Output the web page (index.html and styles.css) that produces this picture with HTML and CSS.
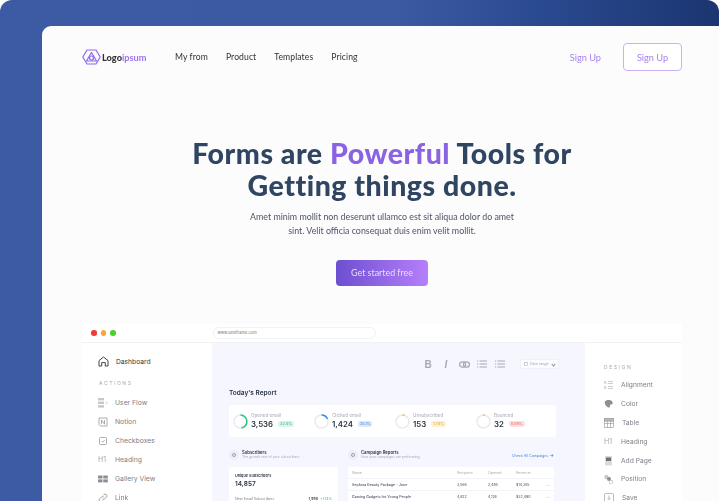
FILE: index.html
```html
<!DOCTYPE html>
<html lang="en">
<head>
    <meta charset="UTF-8">
    <meta name="viewport" content="width=device-width, initial-scale=1.0">
    <title>Forms are Powerful Tools</title>
    <link rel="stylesheet" href="styles.css">
</head>
<body>
<div class="frame">
<div class="card">

    <!-- Top nav -->
    <header class="nav">
        <a class="logo">
            <svg width="19" height="16" viewBox="0 0 19 16" fill="none" stroke="#8f68ea" stroke-width="1.2" stroke-linejoin="round">
                <path d="M5 1h9l4.2 7-4.2 7H5L.8 8z"/>
                <path d="M9.5 3.5l5 8.5h-10z"/>
                <circle cx="9.5" cy="9" r="2"/>
            </svg>
            <span class="logo-text">Logo<em>ipsum</em></span>
        </a>
        <nav class="nav-links">
            <a>My from</a>
            <a>Product</a>
            <a>Templates</a>
            <a>Pricing</a>
        </nav>
        <a class="nav-signup">Sign Up</a>
        <a class="nav-button">Sign Up</a>
    </header>

    <!-- Hero -->
    <section class="hero">
        <h1>Forms are <span>Powerful</span> Tools for<br>Getting things done.</h1>
        <p>Amet minim mollit non deserunt ullamco est sit aliqua dolor do amet<br>sint. Velit officia consequat duis enim velit mollit.</p>
        <a class="cta">Get started free</a>
    </section>

    <!-- App preview -->
    <section class="app">
        <div class="titlebar">
            <i class="dot red"></i><i class="dot yellow"></i><i class="dot green"></i>
            <div class="address">www.bestframe.com</div>
        </div>
        <div class="app-body">
            <aside class="sidebar">
                <div class="side-row side-main">
                    <svg width="11" height="11" viewBox="0 0 11 11" fill="none" stroke="#444" stroke-width="1"><path d="M1 10V4.6L5.5 1 10 4.6V10H7.3V6.6H3.700V10z"/></svg>
                    Dashboard
                </div>
                <div class="side-title">ACTIONS</div>
                <div class="side-row">
                    <svg width="10" height="10" viewBox="0 0 10 10" fill="#c4c7cd"><rect y="0" width="6" height="2.4"/><rect y="3.6" width="6" height="2.4"/><rect y="7.2" width="6" height="2.4"/><path d="M7.5 3.5L9.500 5l-2 1.500" fill="none" stroke="#c4c7cd" stroke-width=".7"/></svg>
                    User Flow
                </div>
                <div class="side-row">
                    <svg width="10" height="10" viewBox="0 0 10 10" fill="none" stroke="#999" stroke-width=".8"><path d="M1 1h8v8H2.500L1 7.500z"/><path d="M3.500 7.200V3l3 4.200V3"/></svg>
                    Notion
                </div>
                <div class="side-row">
                    <svg width="10" height="10" viewBox="0 0 10 10" fill="none" stroke="#999" stroke-width=".8"><rect x="1.500" y="1.500" width="7" height="7" rx="1"/><path d="M3.500 5l1.200 1.200 2-2.200"/></svg>
                    Checkboxes
                </div>
                <div class="side-row"><b class="h-icon">H1</b>Heading</div>
                <div class="side-row">
                    <svg width="10" height="10" viewBox="0 0 10 10" fill="#8b8f96"><rect y="1.500" width="4.500" height="3"/><rect x="5.300" y="1.500" width="4.500" height="3"/><rect y="5.400" width="4.500" height="3"/><rect x="5.300" y="5.400" width="4.500" height="3"/></svg>
                    Gallery View
                </div>
                <div class="side-row">
                    <svg width="10" height="10" viewBox="0 0 10 10" fill="none" stroke="#999" stroke-width=".9"><path d="M4.200 5.800a1.800 1.800 0 0 0 2.600 0l1.600-1.600a1.800 1.800 0 0 0-2.600-2.600l-.7.7"/><path d="M5.800 4.200a1.800 1.800 0 0 0-2.600 0L1.600 5.800a1.800 1.800 0 0 0 2.600 2.600l.7-.7"/></svg>
                    Link
                </div>
            </aside>

            <main class="report">
                <div class="toolbar">
                    <b class="tool">B</b>
                    <i class="tool tool-i">I</i>
                    <svg class="tool-svg" width="11" height="7" viewBox="0 0 11 7" fill="none" stroke="#a3a9b8" stroke-width="1.300"><rect x=".6" y=".8" width="6" height="5.400" rx="2.700"/><rect x="4.400" y=".8" width="6" height="5.400" rx="2.700"/></svg>
                    <svg class="tool-svg tool-list" width="10" height="8" viewBox="0 0 10 8" stroke="#a3a9b8" stroke-width="1.200"><path d="M0 1h1.200M2.500 1H10M0 4h1.200M2.500 4H10M0 7h1.200M2.500 7H10"/></svg>
                    <svg class="tool-svg tool-list" width="10" height="8" viewBox="0 0 10 8" stroke="#a3a9b8" stroke-width="1.200"><path d="M0 1h1.200M2.500 1H10M0 4h1.200M2.500 4H10M0 7h1.200M2.500 7H10"/></svg>
                    <div class="date-select">
                        <svg width="4" height="4" viewBox="0 0 4 4" fill="none" stroke="#a3a9b8" stroke-width=".5"><rect x=".3" y=".5" width="3.400" height="3"/></svg>
                        Date range
                        <span class="caret"></span>
                    </div>
                </div>

                <h2>Today's Report</h2>

                <div class="stats">
                    <div class="stat">
                        <svg class="ring" width="15" height="15" viewBox="0 0 15 15" fill="none" stroke-width="1.500"><circle cx="7.500" cy="7.500" r="6.500" stroke="#e9ebef"/><path d="M7.500 1a6.500 6.500 0 0 1 1 12.900" stroke="#2cc38b"/></svg>
                        <div><small>Opened email</small><div class="stat-value">3,536 <span class="pill pill-green">32.4%</span></div></div>
                    </div>
                    <div class="stat">
                        <svg class="ring" width="15" height="15" viewBox="0 0 15 15" fill="none" stroke-width="1.500"><circle cx="7.500" cy="7.500" r="6.500" stroke="#e9ebef"/><path d="M7.500 1a6.500 6.500 0 0 1 6 4" stroke="#3d8bf2"/></svg>
                        <div><small>Clicked email</small><div class="stat-value">1,424 <span class="pill pill-blue">25.1%</span></div></div>
                    </div>
                    <div class="stat">
                        <svg class="ring" width="15" height="15" viewBox="0 0 15 15" fill="none" stroke-width="1.500"><circle cx="7.500" cy="7.500" r="6.500" stroke="#e9ebef"/><path d="M7.500 1a6.500 6.500 0 0 1 2 .3" stroke="#f5b342"/></svg>
                        <div><small>Unsubscribed</small><div class="stat-value">153 <span class="pill pill-yellow">1.74%</span></div></div>
                    </div>
                    <div class="stat">
                        <svg class="ring" width="15" height="15" viewBox="0 0 15 15" fill="none" stroke-width="1.500"><circle cx="7.500" cy="7.500" r="6.500" stroke="#e9ebef"/><path d="M7.500 1h1" stroke="#ef7b7b"/></svg>
                        <div><small>Bounced</small><div class="stat-value">32 <span class="pill pill-red">0.09%</span></div></div>
                    </div>
                </div>

                <div class="panels">
                    <div class="panel panel-left">
                        <div class="panel-head">
                            <span class="panel-icon"></span>
                            <div><strong>Subscribers</strong><small>The growth rate of your subscribers</small></div>
                        </div>
                        <div class="panel-box subs">
                            <strong>Unique Subscribers</strong>
                            <div class="subs-value">14,857</div>
                            <div class="subs-row"><span>New Email Subscribers</span><b>1,958</b><em>+1.14%</em></div>
                        </div>
                    </div>
                    <div class="panel panel-right">
                        <div class="panel-head">
                            <span class="panel-icon"></span>
                            <div><strong>Campaign Reports</strong><small>How your campaigns are performing</small></div>
                            <a class="panel-link">Check All Campaigns <span>&rarr;</span></a>
                        </div>
                        <div class="panel-box table">
                            <div class="table-row table-head"><span>Name</span><span>Recipient</span><span>Opened</span><span>Revenue</span><span></span></div>
                            <div class="table-row"><b>Sephora Beauty Package - June</b><span>3,586</span><span>2,495</span><span>$14,385</span><span class="more">&middot;&middot;&middot;</span></div>
                            <div class="table-row"><b>Gaming Gadgets for Young People</b><span>4,622</span><span>4,126</span><span>$32,490</span><span class="more">&middot;&middot;&middot;</span></div>
                        </div>
                    </div>
                </div>
            </main>

            <aside class="sidebar sidebar-right">
                <div class="side-title">DESIGN</div>
                <div class="side-row">
                    <svg width="9" height="10" viewBox="0 0 9 10" stroke="#b5b8be" stroke-width=".7" fill="none"><path d="M0 4L1.200 1l1.200 3M0 9l1.200-3 1.200 3M4 1.500h5M4 3.500h5M4 6.500h5M4 8.500h5"/></svg>
                    Alignment
                </div>
                <div class="side-row">
                    <svg width="9" height="10" viewBox="0 0 9 10" fill="#8b8f96"><path d="M1 2.500C3 .5 7 .5 8.500 3c.6 1.300 0 2.500-1.500 2.500-1.200 0-1 1.200-1 2S4.500 9 3.500 8C2 7 0 4.500 1 2.500z"/></svg>
                    Color
                </div>
                <div class="side-row">
                    <svg width="10" height="10" viewBox="0 0 10 10" fill="none" stroke="#9da1a8" stroke-width=".7"><rect x=".4" y=".6" width="9.200" height="8.800"/><path d="M.4 3h9.200M.4 5.500h9.200M3.500 3v6.400M6.500 3v6.400"/><rect x=".4" y=".6" width="9.200" height="2.400" fill="#b5b8be"/></svg>
                    Table
                </div>
                <div class="side-row"><b class="h-icon">H1</b>Heading</div>
                <div class="side-row">
                    <svg width="9" height="10" viewBox="0 0 9 10"><rect x="1" y="0" width="7" height="9.500" fill="#d9dbe0"/><rect x="2" y="1.500" width="5" height="3.500" fill="#6d7178"/></svg>
                    Add Page
                </div>
                <div class="side-row">
                    <svg width="9" height="10" viewBox="0 0 9 10"><circle cx="2.500" cy="3" r="2.200" fill="#c4c7cd"/><circle cx="5" cy="5" r="2" fill="#8b8f96"/><rect x="5.500" y="6.500" width="3" height="3" fill="none" stroke="#b5b8be" stroke-width=".6"/></svg>
                    Position
                </div>
                <div class="side-row">
                    <svg width="10" height="10" viewBox="0 0 10 10" fill="none" stroke="#9da1a8" stroke-width=".7"><rect x=".5" y=".5" width="9" height="9" rx="1"/><path d="M5 2.500v4M3.500 5L5 6.500 6.500 5"/></svg>
                    Save
                </div>
            </aside>
        </div>
    </section>

</div>
</div>
</body>
</html>
```

FILE: styles.css
```css
html, body {
    margin: 0;
    height: 501px;
    overflow: hidden;
    background: #fff;
}
body {
    font-family: "Noto Sans", "Open Sans", sans-serif;
    color: #333;
}
a {
    text-decoration: none;
}
.frame {
    height: 501px;
    box-sizing: border-box;
    padding: 26px 0 0 42px;
    overflow: hidden;
    border-radius: 12px 12px 0 0;
    background: linear-gradient(90deg, #3c5ba4 0%, #3b5aa2 55%, #2a4a90 75%, #1b3570 100%);
}
.card {
    height: 475px;
    box-sizing: border-box;
    padding: 17px 37px 0 40px;
    overflow: hidden;
    background: #fcfcfd;
    border-radius: 9px 0 0 0;
}

/* nav */
.nav {
    display: flex;
    align-items: center;
    height: 28px;
    font-family: Lato, sans-serif;
    font-size: 8.600px;
    filter: blur(0.25px);
}
.logo {
    display: flex;
    align-items: center;
    gap: 1px;
    width: 93px;
}
.logo-text {
    font-family: Lato, sans-serif;
    font-weight: 900;
    font-size: 9.200px;
    color: #333;
}
.logo-text em {
    font-style: normal;
    font-weight: 700;
    color: #9a73ee;
}
.nav-links {
    display: flex;
    gap: 18px;
    flex: 1;
}
.nav-links a {
    color: #333;
    letter-spacing: 0.1px;
}
.nav-signup {
    color: #a883ee;
    margin-right: 22px;
    font-size: 9.200px;
}
.nav-button {
    width: 59px;
    height: 28px;
    box-sizing: border-box;
    display: flex;
    align-items: center;
    justify-content: center;
    color: #a883ee;
    font-size: 9.200px;
    background: #fff;
    border: 1px solid #c9b2f1;
    border-radius: 4px;
}

/* hero */
.hero {
    text-align: center;
    filter: blur(0.25px);
}
.hero h1 {
    margin: 66px 0 0;
    font-family: Lato, sans-serif;
    font-size: 28.500px;
    line-height: 32px;
    font-weight: 900;
    color: #2f4562;
    letter-spacing: 0.52px;
}
.hero h1 span {
    color: #8a63e4;
}
.hero p {
    margin: 9px 0 0;
    font-family: Lato, sans-serif;
    font-size: 8.850px;
    line-height: 14px;
    color: #4c5466;
}
.cta {
    display: block;
    width: 92px;
    height: 26px;
    margin: 22px auto 0;
    line-height: 26px;
    font-family: Lato, sans-serif;
    font-size: 8.900px;
    color: #e8defc;
    border-radius: 4px;
    background: linear-gradient(90deg, #6c4fd0, #b67ffb);
}

/* app preview */
.app {
    margin-top: 38px;
    background: #fff;
    font-family: Inter, sans-serif;
    filter: blur(0.45px);
}
.titlebar {
    display: flex;
    align-items: center;
    height: 19px;
    padding-left: 9px;
    border-bottom: 1px solid #f1f2f4;
    box-sizing: border-box;
}
.dot {
    width: 5.500px;
    height: 5.500px;
    margin-right: 4px;
    border-radius: 50%;
}
.red { background: #f5383c; }
.yellow { background: #f8a832; }
.green { background: #4cd02e; }
.address {
    margin-left: 93px;
    width: 163px;
    height: 12px;
    box-sizing: border-box;
    padding-left: 4px;
    line-height: 10px;
    font-size: 4px;
    color: #777;
    border: 1px solid #f1f2f4;
    border-radius: 6px;
}
.app-body {
    display: flex;
}
.sidebar {
    width: 130px;
    box-sizing: border-box;
    padding: 9px 0 0 16px;
    flex-shrink: 0;
}
.side-row {
    display: flex;
    align-items: center;
    gap: 7px;
    height: 19px;
    font-size: 6.800px;
    color: #7d8087;
}
.side-row svg {
    flex-shrink: 0;
}
.side-main {
    color: #333;
    font-size: 6.700px;
}
.side-title {
    margin: 7px 0 5px 1px;
    height: 10px;
    line-height: 10px;
    font-size: 5px;
    letter-spacing: 1.600px;
    color: #a5a8ae;
}
.h-icon {
    width: 10px;
    font-weight: 400;
    font-size: 7px;
    color: #a5a8ae;
}
.sidebar-right {
    width: 98px;
    padding: 19px 0 0 19px;
}
.sidebar-right .side-title {
    margin: 0 0 4px 0;
}
.sidebar-right .side-row {
    gap: 8px;
    height: 18.800px;
    font-size: 6.700px;
}
.sidebar-right .h-icon {
    width: 9px;
}

/* main report */
.report {
    width: 373px;
    height: 180px;
    box-sizing: border-box;
    padding: 16px 27px 0 17px;
    background: #f6f7fe;
    flex-shrink: 0;
}
.toolbar {
    display: flex;
    align-items: center;
    height: 10px;
    margin-right: -4px;
    padding-left: 190px;
}
.tool {
    width: 18px;
    font-family: "Liberation Sans", sans-serif;
    font-size: 10px;
    color: #a3a9b8;
    text-align: center;
    font-weight: 700;
}
.tool-i {
    font-weight: 700;
}
.tool-svg {
    margin: 0 3.500px;
}
.tool-list {
    margin: 0 4px;
}
.date-select {
    display: flex;
    align-items: center;
    gap: 2px;
    width: 39px;
    height: 10px;
    margin-left: 11px;
    box-sizing: border-box;
    padding: 0 3px;
    font-size: 3.600px;
    color: #a3a9b8;
    background: #fafbff;
    border: 1px solid #eef0f8;
    border-radius: 2px;
}
.caret {
    margin-left: auto;
    width: 2px;
    height: 2px;
    border-right: 1px solid #8a8f9c;
    border-bottom: 1px solid #8a8f9c;
    transform: rotate(45deg);
}
.report h2 {
    margin: 19px 0 0;
    font-size: 6.500px;
    line-height: 10px;
    font-weight: 600;
    color: #2c3444;
}
.stats {
    display: grid;
    grid-template-columns: repeat(4, 81px);
    width: 327px;
    height: 32px;
    margin-top: 7px;
    box-sizing: border-box;
    padding: 6px 0 0 4px;
    background: #fff;
    border-radius: 3px;
}
.stat {
    display: flex;
    align-items: center;
    gap: 3px;
    height: 20px;
}
.ring {
    flex-shrink: 0;
}
.stat small {
    display: block;
    font-size: 4.600px;
    line-height: 6px;
    color: #a7aab2;
}
.stat-value {
    display: flex;
    align-items: center;
    gap: 5px;
    font-size: 7.800px;
    line-height: 11px;
    font-weight: 600;
    color: #2c3444;
}
.pill {
    padding: 0 2px;
    font-size: 3.800px;
    line-height: 5.500px;
    font-weight: 400;
    border-radius: 2px;
}
.pill-green { background: #d9f6ea; color: #2cb884; }
.pill-blue { background: #dce9fc; color: #3d7fe0; }
.pill-yellow { background: #fdf1d2; color: #e2a53a; }
.pill-red { background: #fde0e0; color: #e56a6a; }

.panels {
    display: flex;
    gap: 10px;
    margin-top: 10px;
}
.panel-left {
    width: 109px;
}
.panel-right {
    width: 206px;
}
.panel-head {
    display: flex;
    align-items: center;
    gap: 3px;
    height: 16px;
}
.panel-head strong {
    display: block;
    font-size: 4.200px;
    line-height: 5px;
    font-weight: 600;
    color: #2c3444;
}
.panel-head small {
    display: block;
    font-size: 3.400px;
    line-height: 5px;
    color: #a7aab2;
}
.panel-icon {
    width: 10px;
    height: 10px;
    flex-shrink: 0;
    box-sizing: border-box;
    border-radius: 50%;
    background: #eceef6;
    border: 3px solid #eceef6;
    box-shadow: inset 0 0 0 1px #8f93a0;
}
.panel-link {
    margin-left: auto;
    font-size: 3.600px;
    color: #3d7fe0;
}
.panel-link span {
    font-size: 5px;
}
.panel-box {
    margin-top: 4px;
    background: #fff;
    border-radius: 2px;
}
.subs {
    height: 60px;
    box-sizing: border-box;
    padding: 6px;
}
.subs strong {
    display: block;
    font-size: 3.800px;
    line-height: 5px;
    font-weight: 600;
    color: #2c3444;
}
.subs-value {
    margin-top: 2px;
    font-size: 6.500px;
    line-height: 9px;
    font-weight: 600;
    color: #2c3444;
}
.subs-row {
    display: flex;
    align-items: center;
    gap: 2px;
    margin-top: 8px;
    font-size: 3.600px;
    line-height: 5px;
    color: #7d8087;
}
.subs-row span {
    flex: 1;
}
.subs-row b {
    font-weight: 600;
    color: #2c3444;
}
.subs-row em {
    font-style: normal;
    color: #2cb884;
}
.table-row {
    display: grid;
    grid-template-columns: 105px 31px 28px 30px 1fr;
    align-items: center;
    height: 12px;
    padding-left: 4px;
    font-size: 3.600px;
    color: #444c5e;
    border-top: 1px solid #f3f4f8;
    box-sizing: border-box;
}
.table-row b {
    font-weight: 500;
}
.table-head {
    height: 11px;
    border-top: 0;
    color: #a7aab2;
}
.more {
    color: #a7aab2;
    font-size: 5px;
}
```
